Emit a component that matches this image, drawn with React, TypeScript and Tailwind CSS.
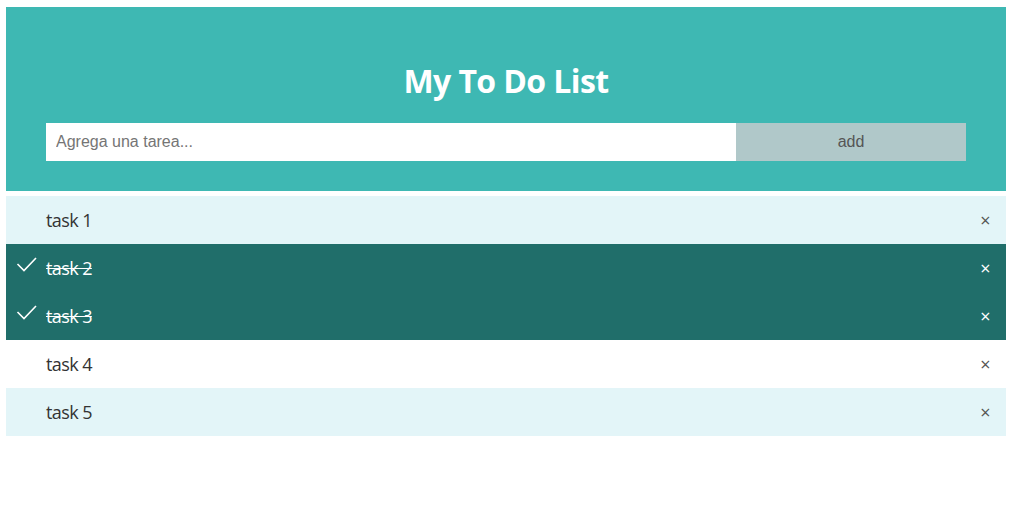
import React from "react";

const tasks = [
  { text: "task 1", checked: false },
  { text: "task 2", checked: true },
  { text: "task 3", checked: true },
  { text: "task 4", checked: false },
  { text: "task 5", checked: false },
];

function Check() {
  return (
    <svg className="absolute left-[10px] top-[12px]" width="22" height="18" viewBox="0 0 22 18">
      <polyline points="1.5,8 8,14.5 20,2" fill="none" stroke="#ffffff" strokeWidth="1.6" />
    </svg>
  );
}

export default function App() {
  return (
    <div className="w-[1016px] h-[513px] bg-white pl-[6px] pt-[7px]" style={{ fontFamily: '"Open Sans", sans-serif' }}>
      <div className="w-[1000px]">
        <div className="bg-[#3eb8b3] px-[40px] pt-[57px] pb-[30px] h-[184px]">
          <h2 className="text-white text-[32px] font-bold text-center leading-[48px] tracking-[-0.6px] -mt-[7px] mb-[18px]">My To Do List</h2>
          <div className="flex h-[38px]">
            <input
              className="w-[690px] h-[38px] bg-white px-[10px] text-[16px] text-[#333] placeholder:text-[#757575] outline-none"
              style={{ fontFamily: '"Liberation Sans", Arial, sans-serif' }}
              placeholder="Agrega una tarea..."
            />
            <div
              className="w-[230px] h-[38px] bg-[#b0c8c9] text-[#555] text-[16px] flex items-center justify-center"
              style={{ fontFamily: '"Liberation Sans", Arial, sans-serif' }}
            >
              add
            </div>
          </div>
        </div>
        <ul className="mt-[5px]">
          {tasks.map((t, i) => {
            const bg = t.checked ? "bg-[#206e6a]" : i % 2 === 0 ? "bg-[#e3f5f8]" : "bg-white";
            return (
              <li key={t.text} className={`relative h-[48px] pl-[40px] pr-[8px] py-[12px] text-[18px] leading-[24px] tracking-[-0.6px] ${bg}`}>
                {t.checked && <Check />}
                <span className={t.checked ? "text-white line-through" : "text-[#333]"}>{t.text}</span>
                <span className={`absolute right-0 top-0 px-[16px] py-[12px] text-[18px] leading-[24px] ${t.checked ? "text-white" : "text-[#555]"}`}>
                  ×
                </span>
              </li>
            );
          })}
        </ul>
      </div>
    </div>
  );
}
